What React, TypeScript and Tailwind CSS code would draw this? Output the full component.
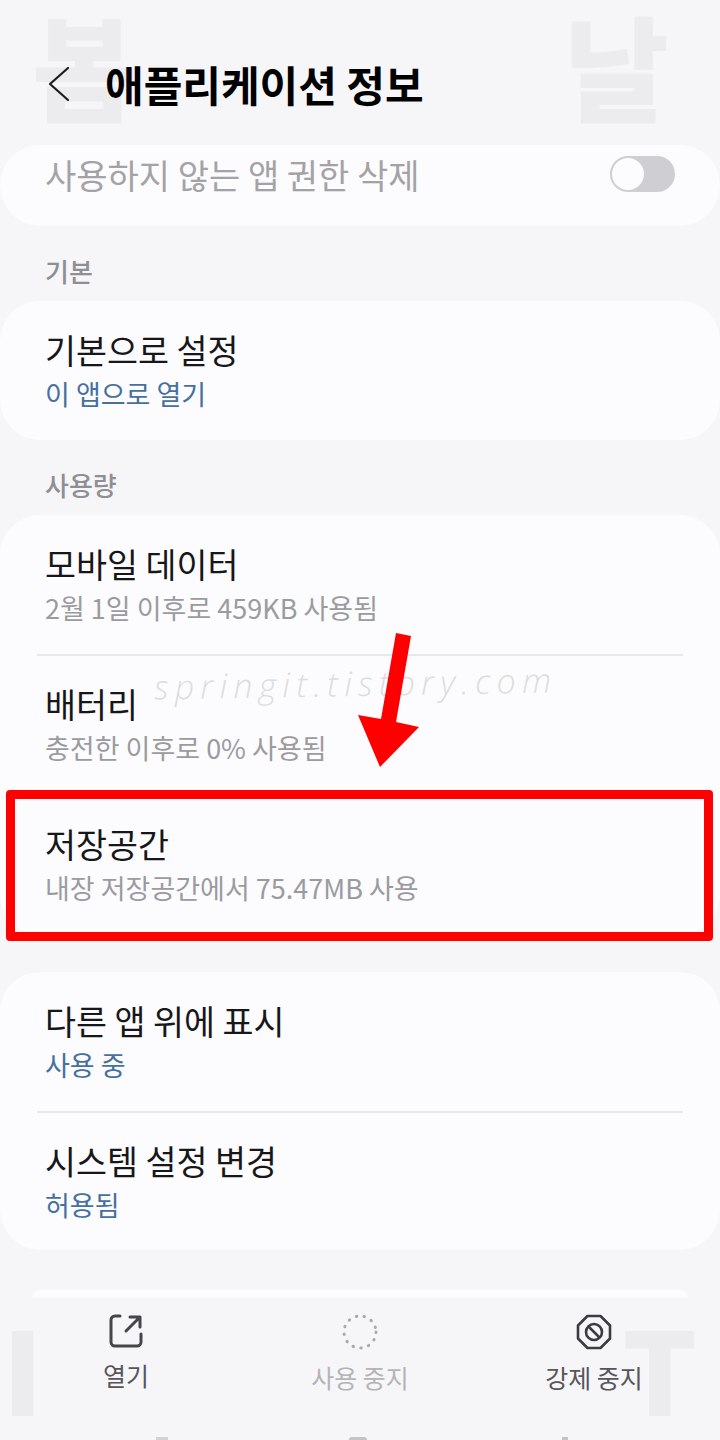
const FONT = "font-['Noto_Sans_CJK_KR','Noto_Sans',sans-serif]";

function Row({ title, sub, blue }: { title: string; sub: string; blue?: boolean }) {
  return (
    <div className="h-[140px] px-[45px] pt-[27px]">
      <div className="h-[44px] text-[33.7px] leading-[44px] text-[#171719]">{title}</div>
      <div className={`h-[44px] text-[27px] leading-[44px] ${blue ? "text-[#45709f]" : "text-[#9b9b9f]"}`}>{sub}</div>
    </div>
  );
}

function Divider() {
  return <div className="mx-[37px] h-[2px] -my-px relative bg-[#e8e8ea]" />;
}

function SectionLabel({ children }: { children: string }) {
  return <div className="h-[75px] px-[45px] pt-[27px] text-[26px] leading-[36px] font-medium text-[#8f8f93]">{children}</div>;
}

function Action({ label, dim, children }: { label: string; dim?: boolean; children: React.ReactNode }) {
  return (
    <div className="flex w-[140px] flex-col items-center">
      {children}
      <div className={`mt-[9px] text-[25px] leading-[36px] whitespace-nowrap ${dim ? "text-[#b4b4b7]" : "text-[#55555a]"}`}>{label}</div>
    </div>
  );
}

export default function App() {
  return (
    <div className={`relative h-[1440px] w-[720px] overflow-hidden bg-[#f6f6f9] ${FONT}`}>
      {/* blog watermark */}
      <div className="absolute left-[32px] top-[7px] text-[114px] leading-[114px] font-black text-[#ececee]">봄</div>
      <div className="absolute left-[564px] top-[7px] text-[114px] leading-[114px] font-black text-[#ececee]">날</div>
      <div className="absolute left-0 top-[1300px] h-[116px] w-full overflow-hidden">
        <div className="absolute left-[2px] top-[-2px] text-[118px] leading-[140px] font-black text-[#ececee]">I</div>
        <div className="absolute left-[622px] top-[-2px] text-[118px] leading-[140px] font-black text-[#ececee]">T</div>
      </div>

      <div className="relative">
        {/* Header */}
        <div className="flex h-[145px] items-start pl-[47px] pt-[56px]">
          <svg width="24" height="36" viewBox="0 0 24 36" fill="none" className="mt-[10px]">
            <path d="M21 2 L3 18 L21 34" stroke="#1c1c1e" strokeWidth="2.2" strokeLinecap="round" strokeLinejoin="round" />
          </svg>
          <h1 className="ml-[34px] text-[42px] leading-[56px] font-bold text-black">애플리케이션 정보</h1>
        </div>

        <div className="flex h-[81px] items-start justify-between rounded-[40px] bg-[#fcfcfe] pl-[45px] pr-[45px] pt-[6px]">
          <span className="text-[34px] leading-[48px] text-[#a3a3a7]">사용하지 않는 앱 권한 삭제</span>
          <div className="mt-[5px] h-[36px] w-[65px] rounded-full bg-[#cfcfd3] p-[2px]">
            <div className="h-[32px] w-[32px] rounded-full bg-[#fcfcfe]" />
          </div>
        </div>

        <SectionLabel>기본</SectionLabel>
        <div className="h-[139px] rounded-[40px] bg-[#fcfcfe]">
          <Row title="기본으로 설정" sub="이 앱으로 열기" blue />
        </div>

        <SectionLabel>사용량</SectionLabel>
        <div className="h-[420px] rounded-[40px] bg-[#fcfcfe]">
          <Row title="모바일 데이터" sub="2월 1일 이후로 459KB 사용됨" />
          <Divider />
          <Row title="배터리" sub="충전한 이후로 0% 사용됨" />
          <Row title="저장공간" sub="내장 저장공간에서 75.47MB 사용" />
        </div>

        <div className="mt-[37px] h-[278px] rounded-[40px] bg-[#fcfcfe]">
          <Row title="다른 앱 위에 표시" sub="사용 중" blue />
          <Divider />
          <Row title="시스템 설정 변경" sub="허용됨" blue />
        </div>

        <div className="mx-[32px] mt-[40px] h-[8px] rounded-t-full bg-[#fcfcfe]" />

        {/* Bottom actions */}
        <div className="flex h-[118px] justify-between px-[56px] pt-[16px]">
          <Action label="열기">
            <svg width="34" height="34" viewBox="0 0 34 34" fill="none" stroke="#45454a" strokeWidth="3" strokeLinecap="round" strokeLinejoin="round">
              <path d="M11 2 H6 a4 4 0 0 0 -4 4 V28 a4 4 0 0 0 4 4 H28 a4 4 0 0 0 4 -4 V20" />
              <path d="M17 17 L31 3 M21 3 H31 V13" />
            </svg>
          </Action>
          <Action label="사용 중지" dim>
            <svg width="36" height="36" viewBox="0 0 36 36" fill="none">
              <circle cx="18" cy="18" r="16" stroke="#aaaaae" strokeWidth="3" strokeLinecap="round" strokeDasharray="0.5 7.4" />
            </svg>
          </Action>
          <Action label="강제 중지">
            <svg width="36" height="36" viewBox="0 0 36 36" fill="none" stroke="#3c3c40" strokeLinecap="round" strokeLinejoin="round">
              <path d="M11.5 2 H24.5 L34 11.5 V24.5 L24.5 34 H11.5 L2 24.5 V11.5 Z" strokeWidth="2.6" />
              <circle cx="18" cy="18" r="8" strokeWidth="2.6" />
              <path d="M13 13 L23 23" strokeWidth="2.6" />
            </svg>
          </Action>
        </div>

        {/* Nav bar, cut off by the bottom of the picture */}
        <div className="flex h-[24px] items-end pl-[156px]">
          <div className="h-[3px] w-[12px] bg-[#d2d2d5]" />
          <div className="ml-[181px] h-[3px] w-[18px] rounded-t-full bg-[#c4c4c8]" />
          <div className="ml-[195px] h-[3px] w-[6px] bg-[#c4c4c8]" />
        </div>
      </div>

      {/* Annotations over the screenshot */}
      <div className="absolute left-[154px] top-[658px] -rotate-1 whitespace-nowrap text-[34px] leading-[50px] tracking-[6.2px] font-light italic text-[#dddddf] font-['Open_Sans',sans-serif]">springit.tistory.com</div>
      <svg className="absolute left-[350px] top-[625px]" width="80" height="150" viewBox="0 0 80 150" fill="none">
        <path d="M46 8 L61 11 L46 97 L69 102 L30 142 L8 90 L31 94 Z" fill="#fe0000" />
      </svg>
      <div className="absolute left-[6px] top-[790px] h-[151px] w-[707px] rounded-[4px] border-[9px] border-[#fe0000]" />
    </div>
  );
}
